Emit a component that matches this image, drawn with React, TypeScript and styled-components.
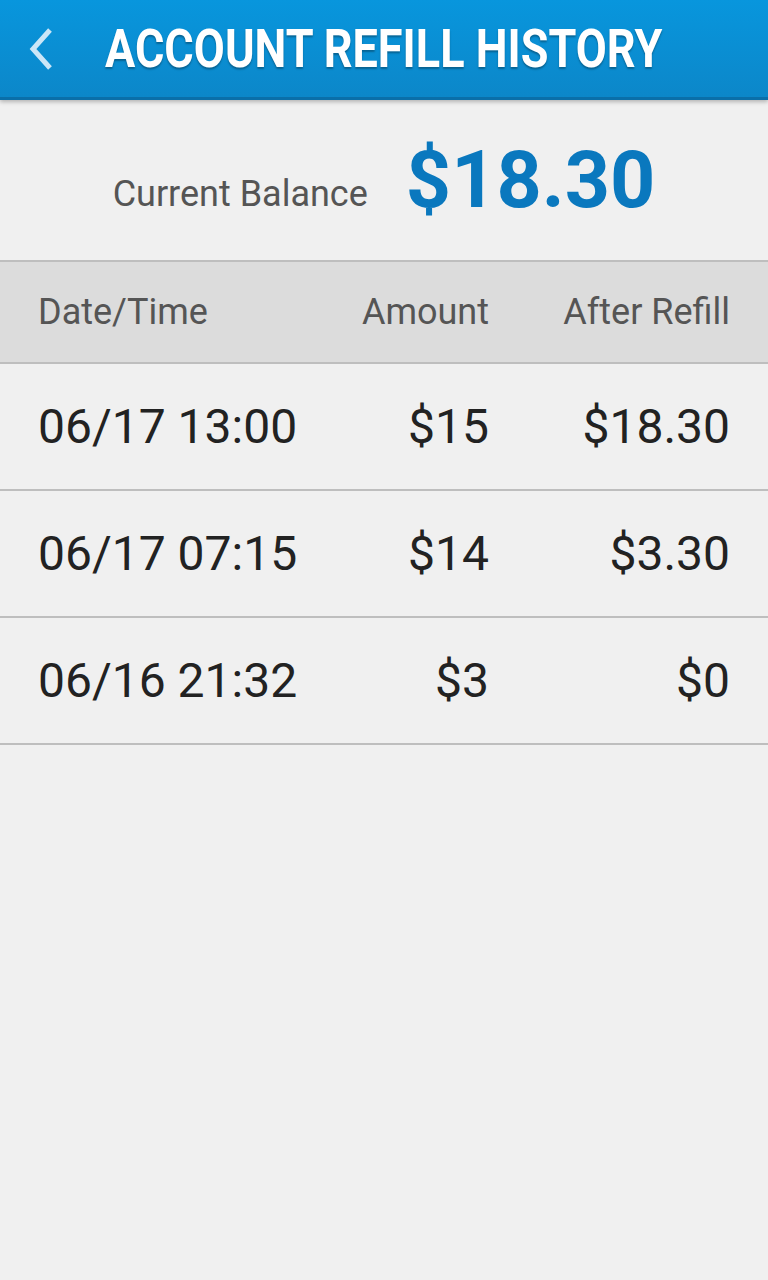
import styled, { createGlobalStyle } from 'styled-components';

const GlobalStyle = createGlobalStyle`
  html, body {
    margin: 0;
    padding: 0;
    background: #f0f0f0;
  }
  body {
    font-family: Roboto, "Liberation Sans", sans-serif;
  }
`;

interface Refill {
  date: string;
  amount: string;
  after: string;
}

const refills: Refill[] = [
  { date: '06/17 13:00', amount: '$15', after: '$18.30' },
  { date: '06/17 07:15', amount: '$14', after: '$3.30' },
  { date: '06/16 21:32', amount: '$3', after: '$0' },
];

const App = () => {
  return (
    <Screen>
      <GlobalStyle />
      <TopBar>
        <BackButton aria-label="Back">
          <svg width="26" height="44" viewBox="0 0 26 44">
            <path d="M22 3 L5 22 L22 41" fill="none" stroke="#cbe6f7" strokeWidth="5" />
          </svg>
        </BackButton>
        <Title>ACCOUNT REFILL HISTORY</Title>
      </TopBar>

      <Balance>
        <BalanceLabel>Current Balance</BalanceLabel>
        <BalanceValue>$18.30</BalanceValue>
      </Balance>

      <HeadRow>
        <HeadCell>Date/Time</HeadCell>
        <HeadCell $right>Amount</HeadCell>
        <HeadCell $right>After Refill</HeadCell>
      </HeadRow>

      {refills.map((r) => (
        <Row key={r.date}>
          <Cell>{r.date}</Cell>
          <Cell $right>{r.amount}</Cell>
          <Cell $right>{r.after}</Cell>
        </Row>
      ))}
    </Screen>
  );
};

const Screen = styled.div`
  min-height: 1280px;
  background: #f0f0f0;
  display: flex;
  flex-direction: column;
`;

const TopBar = styled.header`
  height: 97px;
  background: linear-gradient(#0896dd, #0c87c9);
  border-bottom: 3px solid #0a6fa9;
  box-shadow: 0 2px 4px rgba(0, 0, 0, 0.25);
  display: flex;
  align-items: center;
  position: relative;
  z-index: 1;
`;

const BackButton = styled.div`
  width: 105px;
  padding-left: 28px;
  box-sizing: border-box;
  display: flex;
  align-items: center;
  height: 100%;
`;

const Title = styled.h1`
  margin: 0;
  margin-top: 2px;
  color: #ffffff;
  font-size: 53px;
  font-weight: 700;
  line-height: 1;
  white-space: nowrap;
  text-shadow: 0 2px 2px rgba(0, 0, 0, 0.3);
  transform: scaleX(0.85);
  transform-origin: left center;
`;

const Balance = styled.section`
  height: 160px;
  display: flex;
  align-items: center;
  justify-content: center;
  gap: 38px;
  border-bottom: 2px solid #bebebe;
`;

const BalanceLabel = styled.div`
  font-size: 36px;
  color: #555555;
  margin-top: 28px;
`;

const BalanceValue = styled.div`
  font-size: 79px;
  font-weight: 700;
  color: #0a78be;
`;

const HeadRow = styled.div`
  height: 100px;
  background: #dcdcdc;
  border-bottom: 2px solid #bebebe;
  display: grid;
  grid-template-columns: 1fr 160px 241px;
  align-items: center;
  padding: 0 38px;
`;

const HeadCell = styled.div<{ $right?: boolean }>`
  font-size: 36px;
  color: #555555;
  text-align: ${({ $right }) => ($right ? 'right' : 'left')};
`;

const Row = styled.div`
  height: 125px;
  border-bottom: 2px solid #bebebe;
  display: grid;
  grid-template-columns: 1fr 160px 241px;
  align-items: center;
  padding: 0 38px;
`;

const Cell = styled.div<{ $right?: boolean }>`
  font-size: 48px;
  color: #222222;
  text-align: ${({ $right }) => ($right ? 'right' : 'left')};
`;

export default App;
